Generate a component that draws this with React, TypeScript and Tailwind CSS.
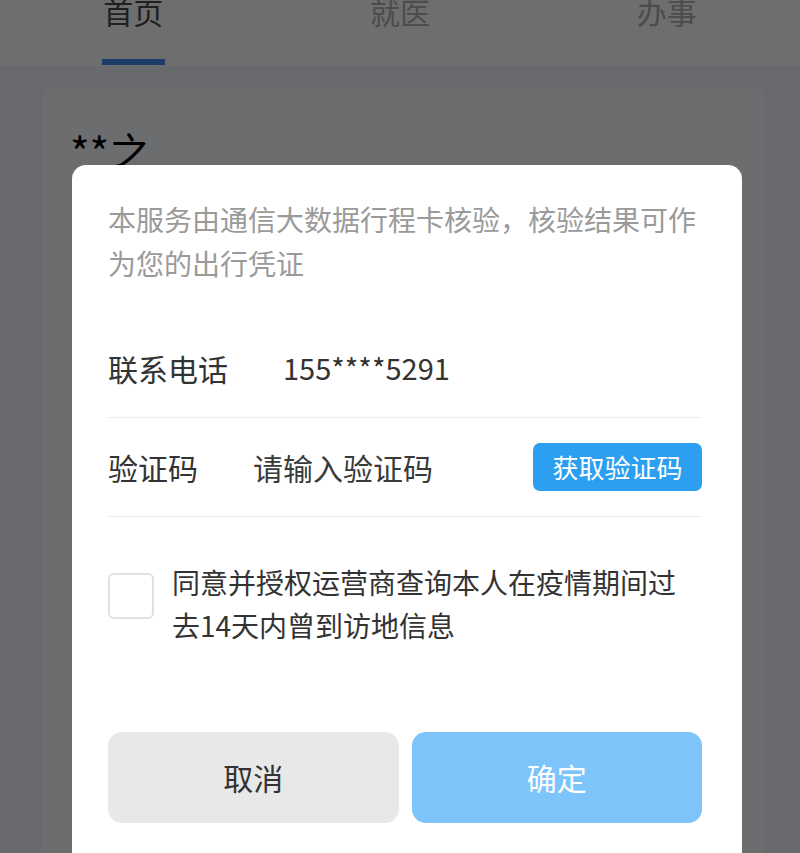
import React from 'react';

const tabs = ['首页', '就医', '办事'];

const App: React.FC = () => {
  return (
    <div className="relative w-[800px] h-[853px] overflow-hidden bg-[#f0f5fc] font-['Noto_Sans_CJK_SC','Noto_Sans',sans-serif]">
      {/* page underneath */}
      <div className="h-[66px] bg-white flex">
        {tabs.map((t, i) => (
          <div key={t} className="flex-1 flex flex-col items-center justify-between h-full">
            <span
              className={
                'text-[30px] leading-none -mt-[4px] ' +
                (i === 0 ? 'text-[#4a4a4a]' : 'text-[#b0b0b0]')
              }
            >
              {t}
            </span>
            <div className={'w-[63px] h-[6px] mb-[1px] ' + (i === 0 ? 'bg-[#3f8ef5]' : 'bg-transparent')} />
          </div>
        ))}
      </div>
      <div className="mt-[22px] ml-[42px] mr-[35px] h-[800px] rounded-[12px] bg-[#fbfcff] pt-[42px] pl-[28px]">
        <span className="text-[42px] leading-none text-black">**之</span>
      </div>

      {/* dim overlay */}
      <div className="absolute inset-0 bg-black/[0.57]" />

      {/* dialog */}
      <div className="absolute left-[72px] top-[165px] w-[670px] h-[720px] rounded-[14px] bg-white pt-[32px] pl-[36px] pr-[40px]">
        <p className="text-[28px] leading-[44px] text-[#9a9a9a]">
          本服务由通信大数据行程卡核验，核验结果可作为您的出行凭证
        </p>

        <div className="mt-[34px] h-[99px] flex items-center border-b border-[#ececec]">
          <span className="w-[175px] text-[30px] text-[#333333]">联系电话</span>
          <span className="text-[29px] text-[#333333]">155****5291</span>
        </div>

        <div className="h-[99px] flex items-center border-b border-[#ececec]">
          <span className="w-[145px] text-[30px] text-[#333333]">验证码</span>
          <span className="text-[30px] text-[#3a3a3a]">请输入验证码</span>
          <button className="ml-auto w-[169px] h-[48px] rounded-[7px] bg-[#2d9ff0] text-white text-[26px] leading-none">
            获取验证码
          </button>
        </div>

        <div className="mt-[56px] flex items-start">
          <div className="w-[46px] h-[46px] shrink-0 rounded-[6px] border-2 border-[#e0e0e0]" />
          <p className="ml-[18px] -mt-[12px] max-w-[529px] text-[28px] leading-[43px] text-[#333333]">
            同意并授权运营商查询本人在疫情期间过去14天内曾到访地信息
          </p>
        </div>

        <div className="mt-[85px] flex gap-[13px]">
          <button className="flex-1 h-[91px] rounded-[14px] bg-[#e8e8e8] text-[30px] text-[#333333]">取消</button>
          <button className="flex-1 h-[91px] rounded-[14px] bg-[#7cc4fa] text-[30px] text-white">确定</button>
        </div>
      </div>
    </div>
  );
};

export default App;
